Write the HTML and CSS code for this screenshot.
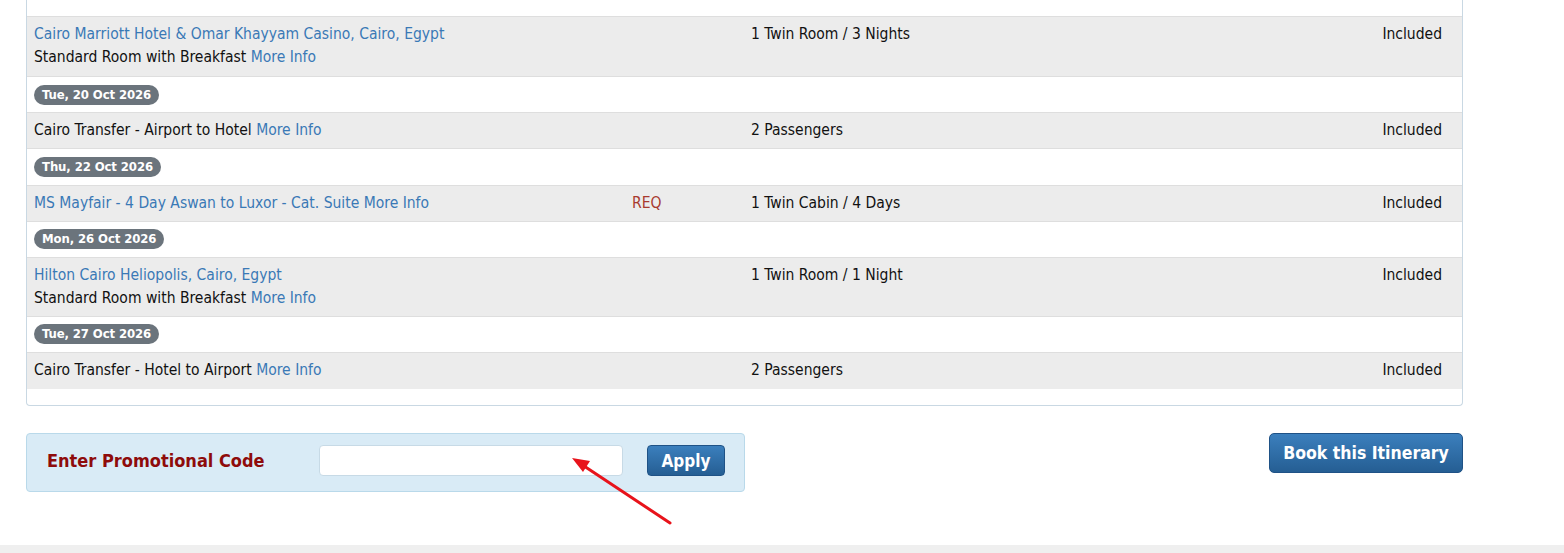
FILE: index.html
```html
<!DOCTYPE html>
<html lang="en">
<head>
<meta charset="utf-8">
<title>Itinerary</title>
<link rel="stylesheet" href="styles.css">
</head>
<body>
<div class="page">
  <div class="panel">
    <div class="row-cut"></div>
    <div class="row row-grey row-first">
      <div class="c-desc"><a class="link" href="#">Cairo Marriott Hotel &amp; Omar Khayyam Casino, Cairo, Egypt</a><br>Standard Room with Breakfast <a class="link" href="#">More Info</a></div>
      <div class="c-req"></div>
      <div class="c-qty">1 Twin Room / 3 Nights</div>
      <div class="c-price">Included</div>
    </div>
    <div class="row row-date"><span class="badge">Tue, 20 Oct 2026</span></div>
    <div class="row row-grey">
      <div class="c-desc">Cairo Transfer - Airport to Hotel <a class="link" href="#">More Info</a></div>
      <div class="c-req"></div>
      <div class="c-qty">2 Passengers</div>
      <div class="c-price">Included</div>
    </div>
    <div class="row row-date"><span class="badge">Thu, 22 Oct 2026</span></div>
    <div class="row row-grey">
      <div class="c-desc"><a class="link" href="#">MS Mayfair - 4 Day Aswan to Luxor - Cat. Suite More Info</a></div>
      <div class="c-req req">REQ</div>
      <div class="c-qty">1 Twin Cabin / 4 Days</div>
      <div class="c-price">Included</div>
    </div>
    <div class="row row-date"><span class="badge">Mon, 26 Oct 2026</span></div>
    <div class="row row-grey">
      <div class="c-desc"><a class="link" href="#">Hilton Cairo Heliopolis, Cairo, Egypt</a><br>Standard Room with Breakfast <a class="link" href="#">More Info</a></div>
      <div class="c-req"></div>
      <div class="c-qty">1 Twin Room / 1 Night</div>
      <div class="c-price">Included</div>
    </div>
    <div class="row row-date"><span class="badge">Tue, 27 Oct 2026</span></div>
    <div class="row row-grey row-last">
      <div class="c-desc">Cairo Transfer - Hotel to Airport <a class="link" href="#">More Info</a></div>
      <div class="c-req"></div>
      <div class="c-qty">2 Passengers</div>
      <div class="c-price">Included</div>
    </div>
  </div>

  <div class="actions">
    <div class="promo">
      <span class="promo-label">Enter Promotional Code</span>
      <input class="promo-input" type="text">
      <button class="btn btn-apply">Apply</button>
    </div>
    <button class="btn btn-book">Book this Itinerary</button>
  </div>
</div>
<div class="footer-band"></div>

<svg class="annot" width="1564" height="553" viewBox="0 0 1564 553">
  <line x1="670" y1="523" x2="584" y2="466" stroke="#e8131b" stroke-width="3" stroke-linecap="round"/>
  <polygon points="572,458 590,461 583,472" fill="#e8131b"/>
</svg>
</body>
</html>
```

FILE: styles.css
```css
html, body {
  margin: 0;
  padding: 0;
  background: #ffffff;
}
body {
  font-family: "DejaVu Sans Condensed", "DejaVu Sans", sans-serif;
  font-size: 15.5px;
  color: #111111;
  width: 1564px;
  height: 553px;
  overflow: hidden;
  position: relative;
}
.page {
  padding-left: 26px;
  width: 1437px;
}
.panel {
  border: 1px solid #c9d8e3;
  border-top: none;
  border-radius: 0 0 4px 4px;
  padding-bottom: 16px;
}
.row-cut {
  height: 16px;
  background: #ffffff;
}
.row {
  display: grid;
  grid-template-columns: 598px 119px 1fr 160px;
  border-top: 1px solid #dedede;
  padding: 6px 19px 6px 7px;
  line-height: 23px;
}
.row-grey { background: #ececec; }
.row-first { padding-bottom: 7px; }
.row-last { padding-bottom: 7px; }
.row-date {
  display: flex;
  align-items: center;
  height: 23.25px;
  background: #ffffff;
}
.c-price { text-align: right; padding-right: 1px; }
.req { color: #a83a2e; }
.link {
  color: #3a79b6;
  text-decoration: none;
}
.badge {
  display: inline-block;
  background: #6b747c;
  color: #ffffff;
  font-weight: bold;
  font-size: 13px;
  line-height: 20px;
  padding: 0 8px;
  border-radius: 10px;
  letter-spacing: -0.1px;
}
.actions {
  display: flex;
  justify-content: space-between;
  align-items: flex-start;
  margin-top: 27px;
}
.promo {
  display: flex;
  align-items: center;
  width: 717px;
  height: 53px;
  padding-bottom: 4px;
  box-sizing: content-box;
  background: #d9ebf6;
  border: 1px solid #b9d9ea;
  border-radius: 4px;
}
.promo-label {
  color: #8e0b0b;
  font-weight: bold;
  font-size: 18px;
  margin-left: 20px;
  width: 272px;
  white-space: nowrap;
}
.promo-input {
  width: 304px;
  height: 31px;
  box-sizing: border-box;
  border: 1px solid #c7dae6;
  border-radius: 4px;
  background: #ffffff;
  margin: 0;
}
.btn {
  font-family: "DejaVu Sans Condensed", "DejaVu Sans", sans-serif;
  font-weight: bold;
  color: #ffffff;
  border: 1px solid #1f5286;
  border-radius: 4px;
  background: linear-gradient(#3b7fbd, #255e93);
  cursor: pointer;
  padding: 0;
}
.btn-apply {
  margin-left: 24px;
  width: 78px;
  height: 31px;
  font-size: 17px;
}
.btn-book {
  width: 194px;
  height: 40px;
  font-size: 17.5px;
  border-radius: 5px;
}
.footer-band {
  position: absolute;
  left: 0;
  right: 0;
  top: 545px;
  height: 8px;
  background: #efefef;
}
.annot {
  position: absolute;
  left: 0;
  top: 0;
  pointer-events: none;
}
```
